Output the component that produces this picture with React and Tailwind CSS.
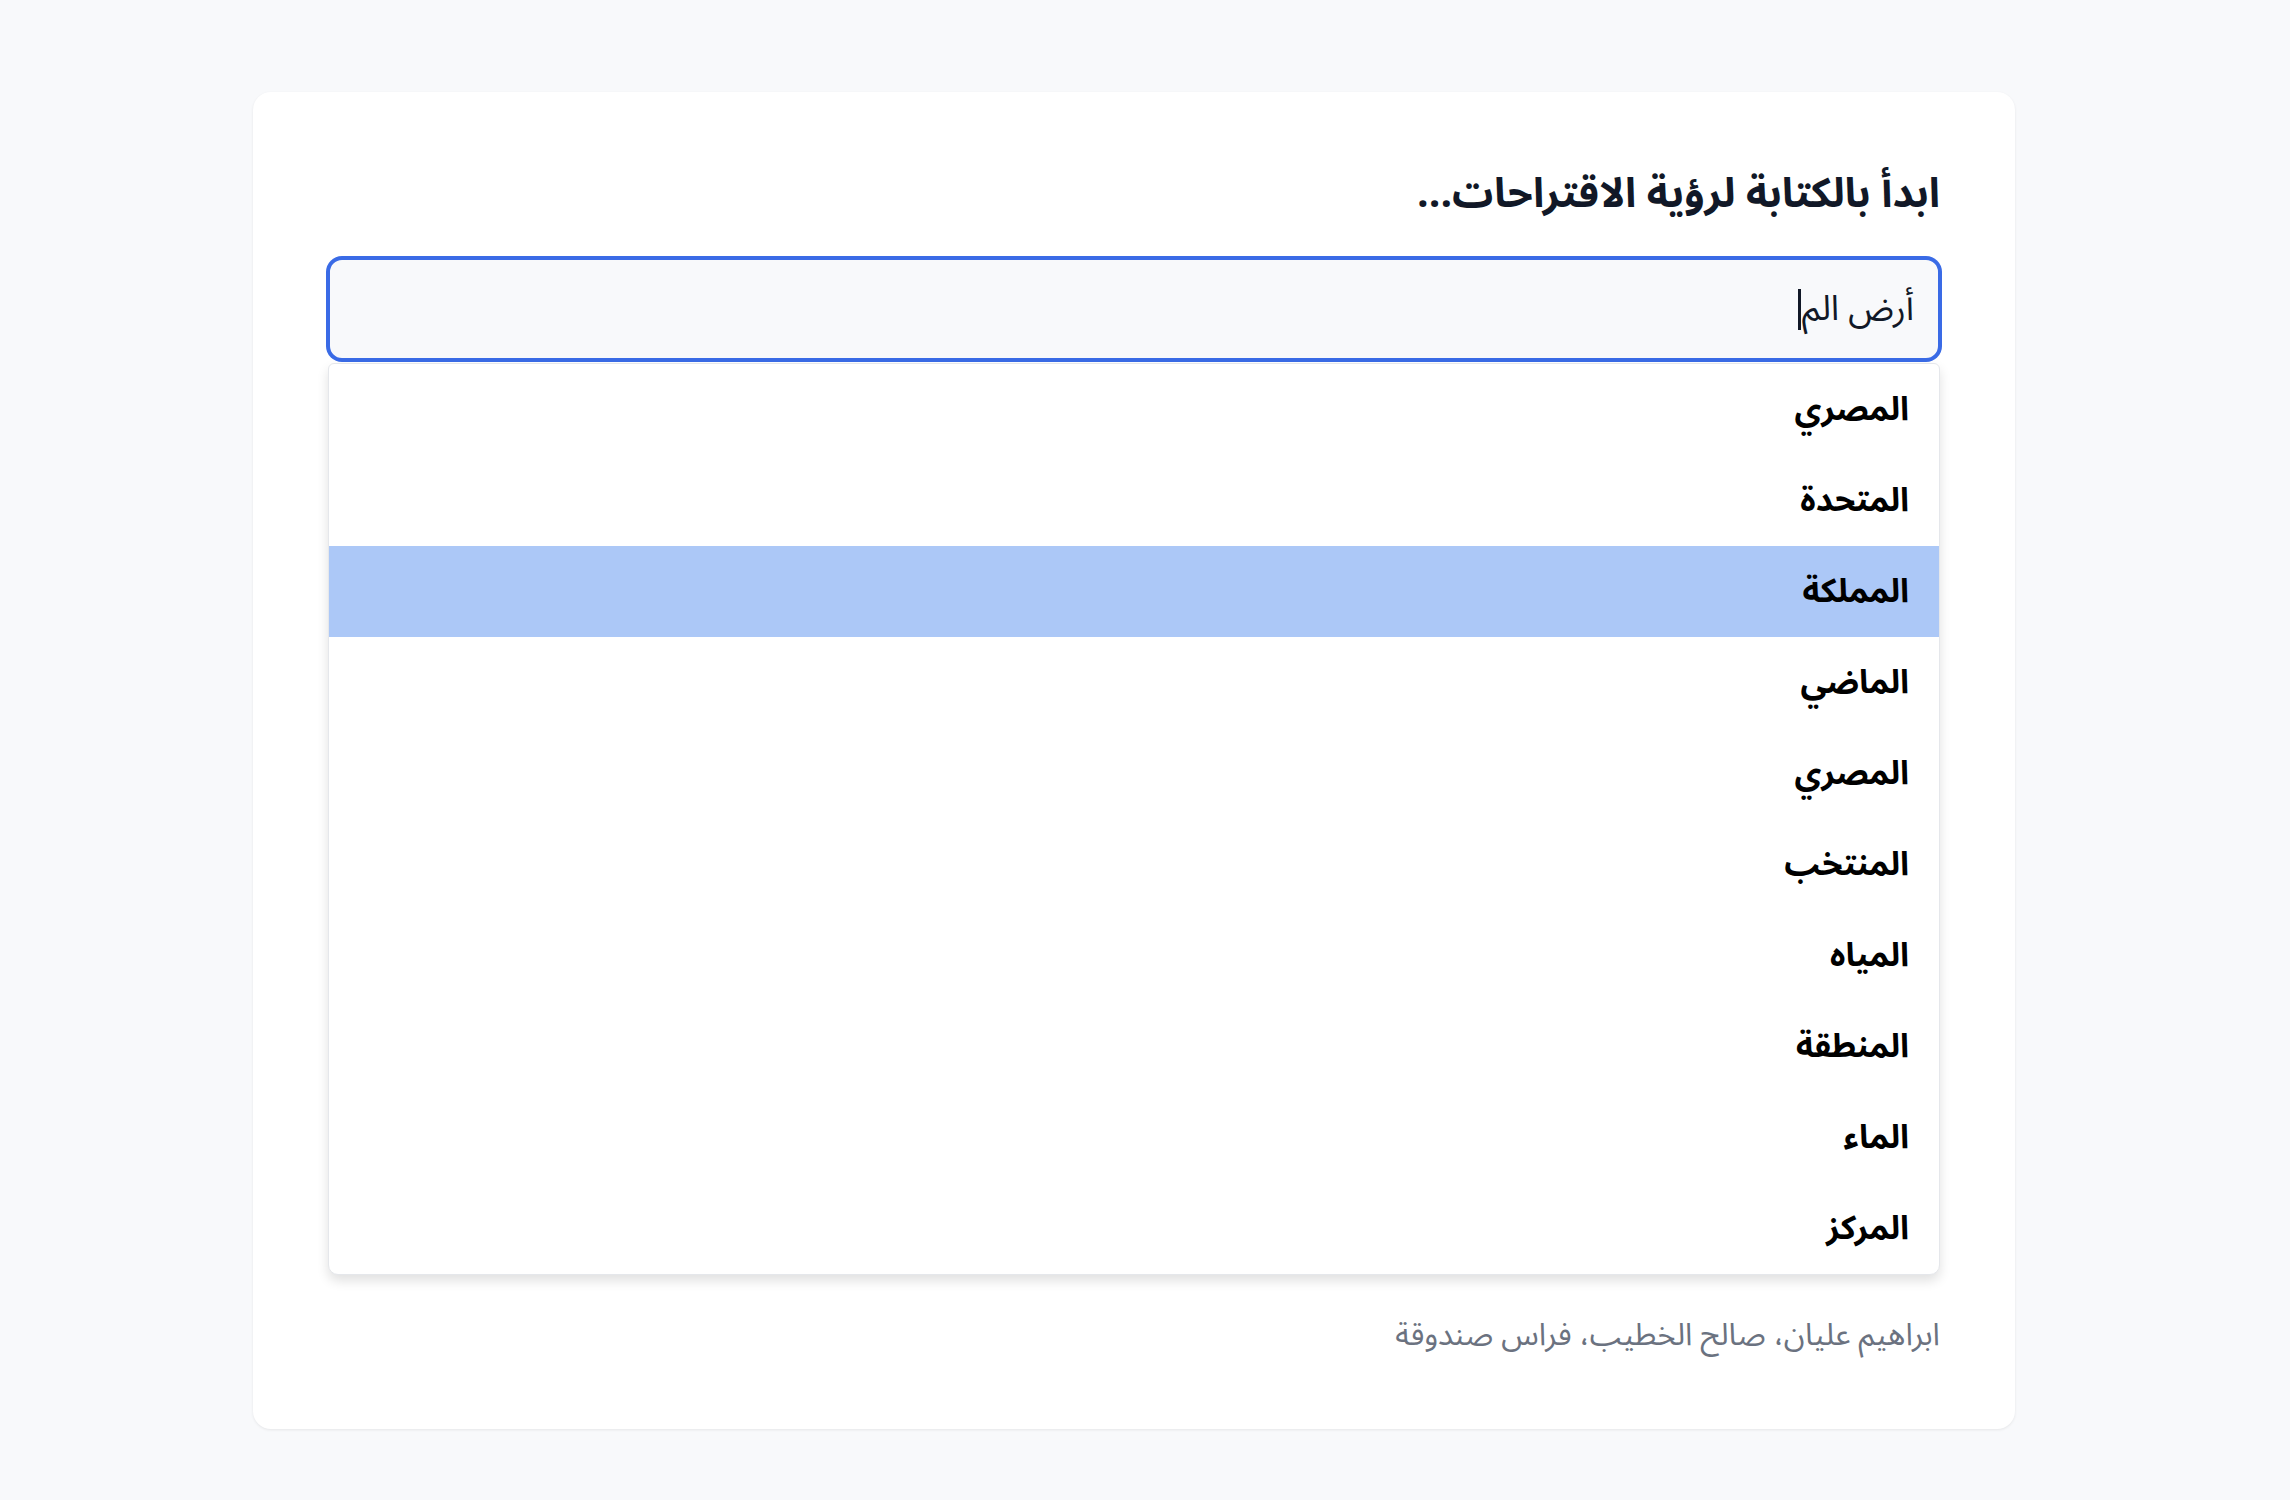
import React from 'react';

const suggestions = [
  "المصري",
  "المتحدة",
  "المملكة",
  "الماضي",
  "المصري",
  "المنتخب",
  "المياه",
  "المنطقة",
  "الماء",
  "المركز",
];

const App = () => {
  const active = 2;

  return (
    <div dir="rtl" className="min-h-screen bg-[#f8f9fb] pt-[92px] pb-[70px] font-['Noto_Sans_Arabic','DejaVu_Sans',sans-serif]">
      <div className="mr-[275px] w-[1762px] rounded-[18px] bg-white px-[75px] pt-[76px] pb-[72px] shadow-[0_1px_3px_rgba(0,0,0,0.08)]">
        <h2 className="mb-[37px] text-[41px] leading-[53px] font-bold text-[#111827]">
          ابدأ بالكتابة لرؤية الاقتراحات...
        </h2>

        <div className="flex h-[102px] w-full items-center rounded-[14px] border-2 border-[#3a6be6] bg-[#f8f9fb] px-6 ring-2 ring-[#3a6be6]">
          <span className="text-[35px] text-[#111827]">أرض الم</span>
          <span className="mr-[1px] h-[41px] w-[3px] bg-[#111827]"></span>
        </div>

        <ul className="mt-[3px] overflow-hidden rounded-b-[10px] rounded-t-[6px] border border-gray-200 bg-white shadow-[0_6px_12px_rgba(0,0,0,0.12)]">
          {suggestions.map((s, i) => (
            <li
              key={i}
              className={
                i === active
                  ? "flex h-[91px] items-center bg-[#acc8f7] px-[30px] text-[33px] font-bold text-black"
                  : "flex h-[91px] items-center px-[30px] text-[33px] font-bold text-black"
              }
            >
              {s}
            </li>
          ))}
        </ul>

        <p className="mt-[38px] text-[31px] leading-[44px] text-[#6b7280]">
          ابراهيم عليان، صالح الخطيب، فراس صندوقة
        </p>
      </div>
    </div>
  );
};

export default App;
